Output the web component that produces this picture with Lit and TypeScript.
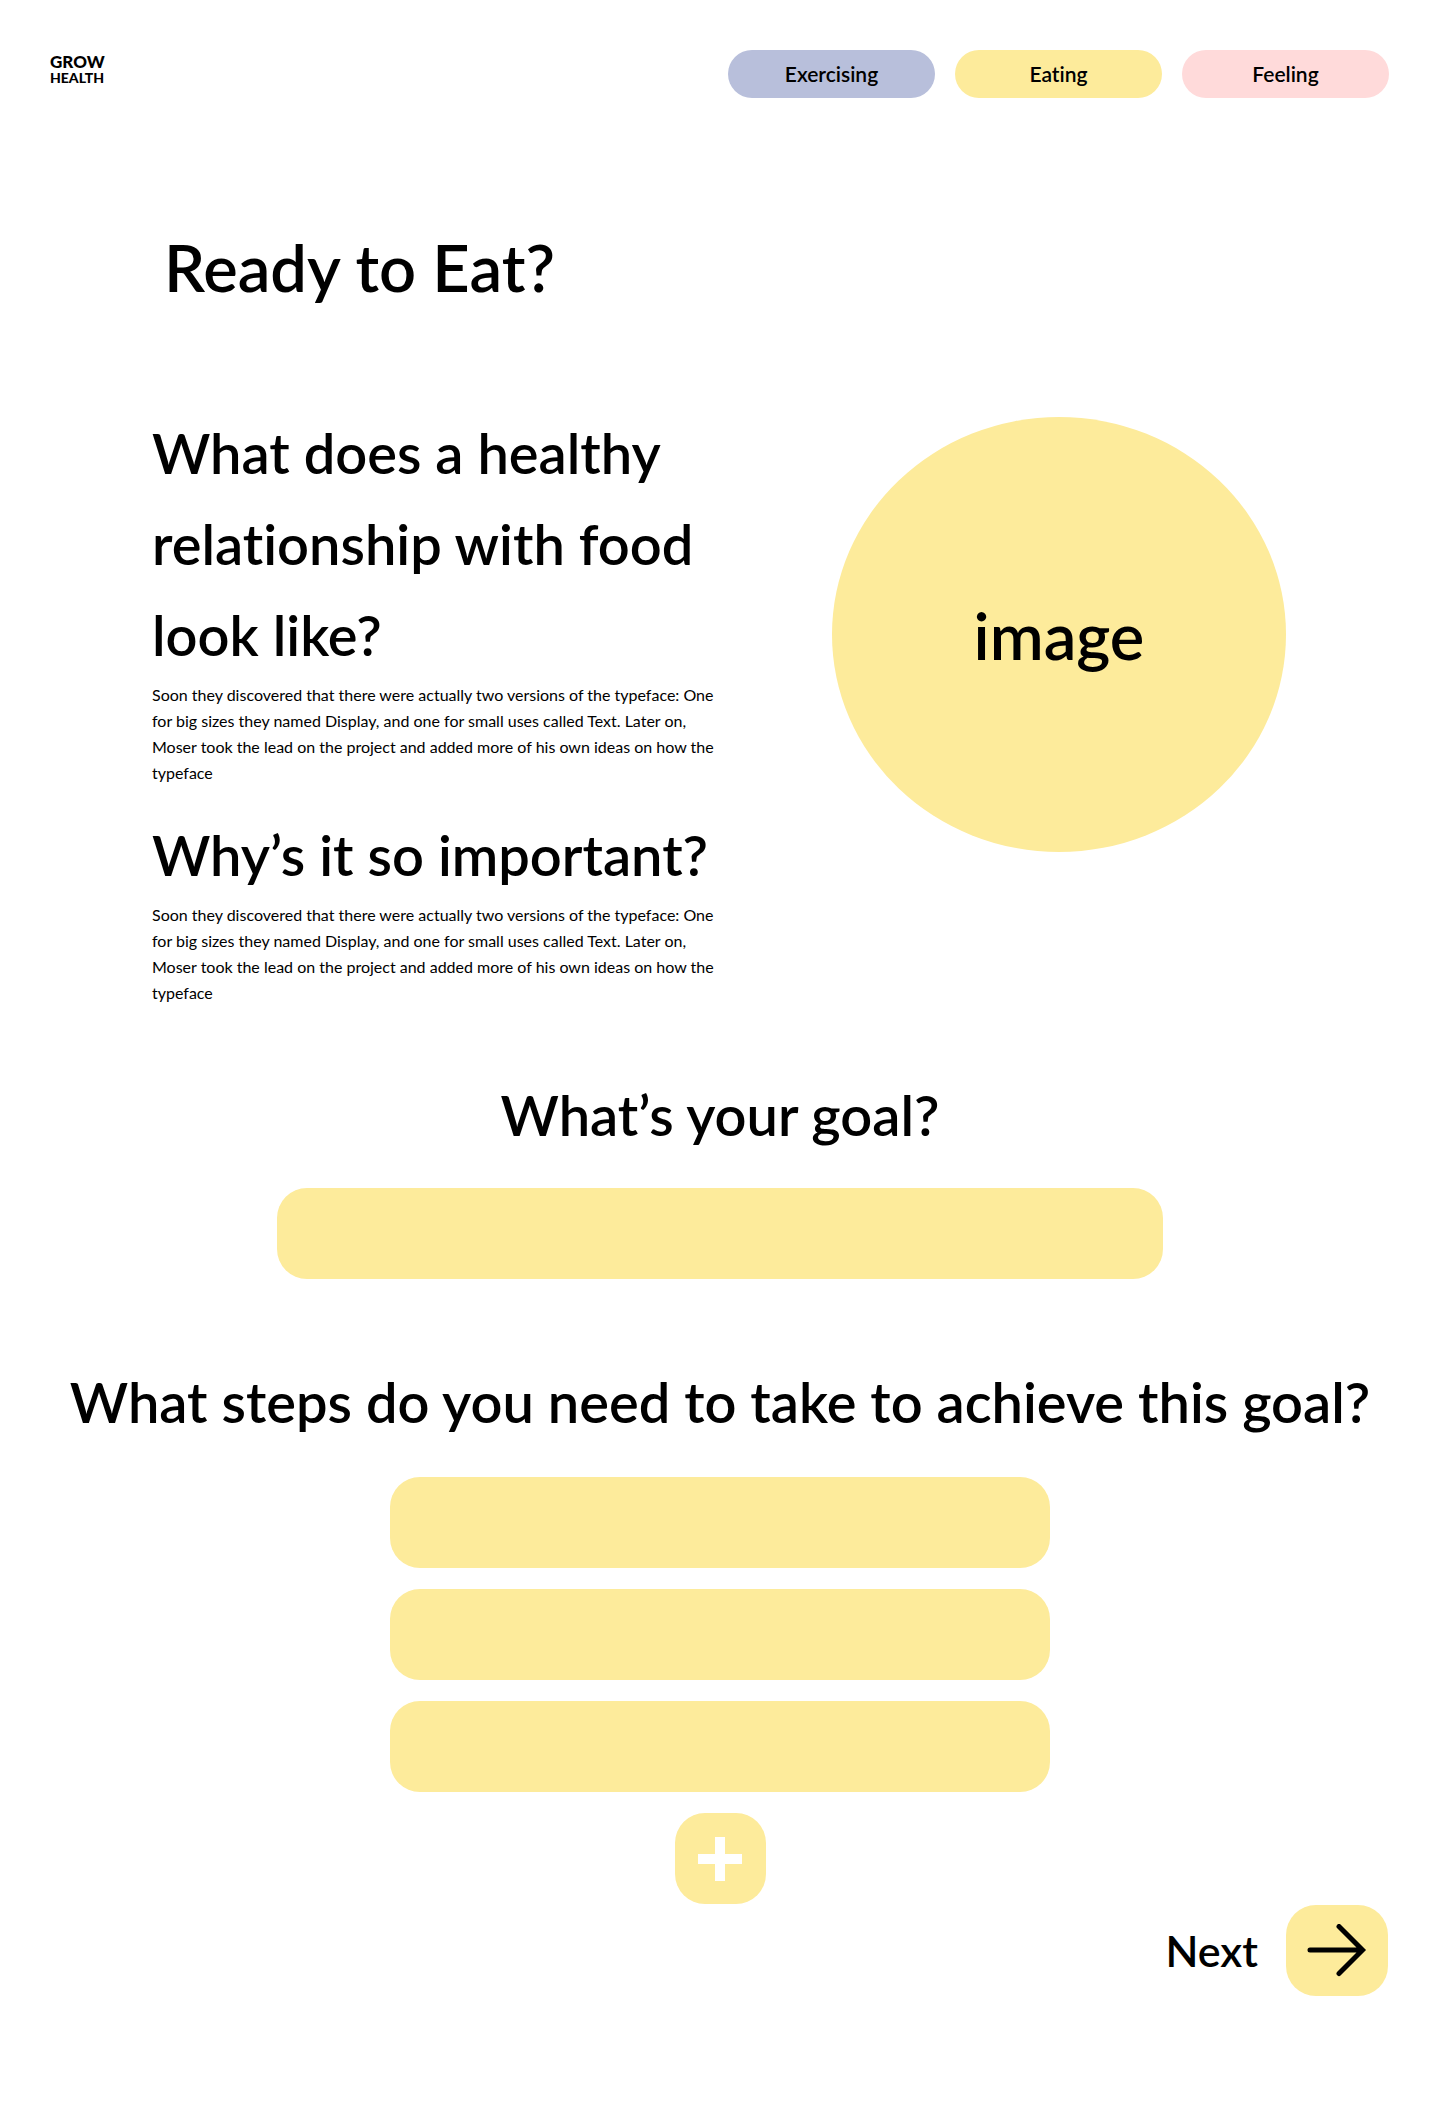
import { LitElement, html, css } from "lit";
import { customElement, state } from "lit/decorators.js";

const TOPICS = [
  { label: "Exercising", tone: "blue" },
  { label: "Eating", tone: "yellow" },
  { label: "Feeling", tone: "pink" },
];

const BLURB =
  "Soon they discovered that there were actually two versions of the typeface: One for big sizes they named Display, and one for small uses called Text. Later on, Moser took the lead on the project and added more of his own ideas on how the typeface";

@customElement("site-header")
export class SiteHeader extends LitElement {
  static styles = css`
    :host {
      display: block;
    }
    .bar {
      display: flex;
      flex-wrap: wrap;
      align-items: flex-start;
      justify-content: space-between;
      gap: 20px;
      padding: 50px 51px 0 50px;
    }
    .logo {
      display: flex;
      flex-direction: column;
      margin-top: 3px;
      color: #000;
      font-weight: 900;
      text-decoration: none;
    }
    .grow {
      font-size: 17px;
      line-height: 18px;
    }
    .health {
      font-size: 14px;
      line-height: 14px;
    }
    .topics {
      display: flex;
      flex-wrap: wrap;
      gap: 20px;
    }
    .topic {
      box-sizing: border-box;
      width: 207px;
      border-radius: 24px;
      color: #000;
      font-size: 21px;
      font-weight: 600;
      line-height: 48px;
      text-align: center;
      text-decoration: none;
    }
    .blue {
      background: #b8bfdb;
    }
    .yellow {
      background: #fdeb9b;
    }
    .pink {
      background: #ffdada;
    }
  `;

  render() {
    return html`
      <header class="bar">
        <a class="logo" href="#home">
          <span class="grow">GROW</span>
          <span class="health">HEALTH</span>
        </a>
        <nav class="topics">
          ${TOPICS.map(
            (t) => html`<a class="topic ${t.tone}" href="#${t.label.toLowerCase()}">${t.label}</a>`
          )}
        </nav>
      </header>
    `;
  }
}

@customElement("app-root")
export class AppRoot extends LitElement {
  static styles = css`
    :host {
      display: block;
      min-height: 100vh;
      background: #fff;
      color: #000;
      font-family: "Lato", "Liberation Sans", sans-serif;
      font-variant-ligatures: none;
    }
    h1,
    h2,
    p {
      margin: 0;
    }
    h1,
    h2 {
      font-weight: 600;
    }
    h1 {
      padding: 119px 52px 0 164px;
      font-size: 65px;
      line-height: 100px;
    }
    h2 {
      font-size: 56px;
      line-height: 91px;
    }
    .intro {
      display: flex;
      flex-wrap: wrap;
      align-items: flex-start;
      justify-content: space-between;
      gap: 40px;
      padding: 90px 154px 0 152px;
    }
    .copy {
      display: flex;
      flex-direction: column;
      gap: 23px;
      max-width: 572px;
    }
    .copy p {
      margin-top: 2px;
      font-size: 16px;
      line-height: 26px;
    }
    .picture {
      display: flex;
      align-items: center;
      justify-content: center;
      width: 454px;
      height: 435px;
      margin-top: 10px;
      border-radius: 50%;
      background: #fdeb9b;
      font-size: 65px;
      font-weight: 600;
    }
    .form {
      display: flex;
      flex-direction: column;
      align-items: center;
      padding: 63px 52px 0;
    }
    .question {
      text-align: center;
    }
    .field {
      box-sizing: border-box;
      width: 100%;
      height: 91px;
      padding: 0 30px;
      border: 0;
      border-radius: 30px;
      background: #fdeb9b;
      color: #000;
      font: inherit;
      font-size: 32px;
    }
    .goal {
      max-width: 886px;
      margin: 28px 0 77px;
    }
    .steps {
      display: flex;
      flex-direction: column;
      align-items: center;
      gap: 21px;
      width: 100%;
      max-width: 660px;
      margin-top: 30px;
    }
    .square {
      display: flex;
      align-items: center;
      justify-content: center;
      width: 91px;
      height: 91px;
      padding: 0;
      border: 0;
      border-radius: 30px;
      background: #fdeb9b;
      cursor: pointer;
    }
    .footer {
      display: flex;
      justify-content: flex-end;
      padding: 1px 52px 123px;
    }
    .next {
      display: flex;
      align-items: center;
      gap: 28px;
      padding: 0;
      border: 0;
      background: none;
      color: #000;
      font: inherit;
      font-size: 43px;
      font-weight: 600;
      cursor: pointer;
    }
    .wide {
      width: 102px;
    }
    svg {
      display: block;
    }
  `;

  @state() private steps = 3;

  private addStep() {
    this.steps += 1;
  }

  render() {
    return html`
      <site-header></site-header>
      <main>
        <h1>Ready to Eat?</h1>
        <section class="intro">
          <div class="copy">
            <article>
              <h2>What does a healthy relationship with food look like?</h2>
              <p>${BLURB}</p>
            </article>
            <article>
              <h2>Why’s it so important?</h2>
              <p>${BLURB}</p>
            </article>
          </div>
          <div class="picture">image</div>
        </section>
        <form class="form" @submit=${(e: Event) => e.preventDefault()}>
          <h2 class="question"><label for="goal">What’s your goal?</label></h2>
          <input class="field goal" id="goal" type="text" />
          <h2 class="question" id="steps-title">
            <label for="step-0">What steps do you need to take to achieve this goal?</label>
          </h2>
          <div class="steps">
            ${Array.from(
              { length: this.steps },
              (_, i) => html`<input
                class="field"
                id="step-${i}"
                type="text"
                aria-labelledby="steps-title"
              />`
            )}
            <button class="square" type="button" aria-label="Add a step" @click=${this.addStep}>
              <svg width="44" height="44" viewBox="0 0 44 44" aria-hidden="true">
                <path d="M17 0h10v17h17v10H27v17H17V27H0V17h17z" fill="#fff" />
              </svg>
            </button>
          </div>
        </form>
      </main>
      <footer class="footer">
        <button class="next" type="button">
          Next
          <span class="square wide">
            <svg width="60" height="54" viewBox="0 0 60 54" aria-hidden="true">
              <path
                d="M3 26H55M32 2.5L55.5 26L32 49.5"
                fill="none"
                stroke="#000"
                stroke-width="5"
                stroke-linecap="round"
                stroke-linejoin="miter"
              />
            </svg>
          </span>
        </button>
      </footer>
    `;
  }
}
